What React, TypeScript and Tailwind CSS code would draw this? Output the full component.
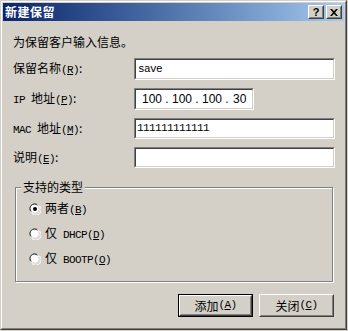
import React from "react";

const CJK = '"Noto Sans CJK SC", "Noto Sans", sans-serif';
const MONO = '"Liberation Mono", "DejaVu Sans Mono", monospace';

function L({ children }: { children: React.ReactNode }) {
  return (
    <span className="text-[11px] tracking-[-0.6px]" style={{ fontFamily: MONO }}>
      {children}
    </span>
  );
}

function Mn({ pre, k }: { pre?: string; k: string }) {
  return (
    <L>
      {pre}(<span className="underline underline-offset-1">{k}</span>)
    </L>
  );
}

function Sunken({ className, children }: { className: string; children?: React.ReactNode }) {
  return (
    <div className={`border border-t-[#808080] border-l-[#808080] border-b-white border-r-white ${className}`}>
      <div className="h-full w-full border border-t-[#404040] border-l-[#404040] border-b-[#d4d0c8] border-r-[#d4d0c8] bg-white flex items-center">
        {children}
      </div>
    </div>
  );
}

function Radio({ checked }: { checked?: boolean }) {
  return (
    <svg width="12" height="12" viewBox="0 0 12 12" className="block">
      <circle cx="6" cy="6" r="5" fill="#ffffff" />
      <path d="M1.2 8.2 A5.3 5.3 0 0 1 8.2 1.2" fill="none" stroke="#808080" strokeWidth="1" />
      <path d="M2.3 8.5 A4.3 4.3 0 0 1 8.5 2.3" fill="none" stroke="#404040" strokeWidth="1" />
      <path d="M3 10.6 A5.3 5.3 0 0 0 10.6 3" fill="none" stroke="#ffffff" strokeWidth="1" />
      <path d="M3.5 9.5 A4.3 4.3 0 0 0 9.5 3.5" fill="none" stroke="#d4d0c8" strokeWidth="1" />
      {checked && <circle cx="6" cy="6" r="2" fill="#000" />}
    </svg>
  );
}

function CapBtn({ children }: { children: React.ReactNode }) {
  return (
    <div className="w-[16px] h-[14px] border border-t-white border-l-white border-b-[#404040] border-r-[#404040] bg-[#d4d0c8]">
      <div className="w-full h-full border border-t-[#d4d0c8] border-l-[#d4d0c8] border-b-[#808080] border-r-[#808080] flex items-center justify-center">
        {children}
      </div>
    </div>
  );
}

function Btn({ def, children }: { def?: boolean; children: React.ReactNode }) {
  const inner = (
    <div className="w-full h-full border border-t-white border-l-white border-b-[#404040] border-r-[#404040]">
      <div className="w-full h-full border border-t-[#d4d0c8] border-l-[#d4d0c8] border-b-[#808080] border-r-[#808080] flex items-center justify-center text-[12px] text-black leading-none">
        {children}
      </div>
    </div>
  );
  return def ? (
    <div className="w-[75px] h-[23px] border border-black">{inner}</div>
  ) : (
    <div className="w-[75px] h-[23px]">{inner}</div>
  );
}

export default function App() {
  return (
    <div className="w-[348px] h-[331px] bg-[#d4d0c8] overflow-hidden" style={{ fontFamily: CJK }}>
      <div className="w-[347px] h-[330px] border border-t-[#d4d0c8] border-l-[#d4d0c8] border-b-[#404040] border-r-[#404040]">
        <div className="w-full h-full border border-t-white border-l-white border-b-[#808080] border-r-[#808080] p-px flex flex-col">
          {/* title bar */}
          <div className="h-[18px] bg-linear-to-r from-[#0a246a] to-[#a6caf0] flex items-center pl-[2px] pr-[2px]">
            <span className="text-white font-bold text-[12px] leading-none tracking-[0.5px]">新建保留</span>
            <div className="ml-auto flex gap-[2px]">
              <CapBtn>
                <span className="text-[11px] font-bold leading-none text-black" style={{ fontFamily: '"Liberation Sans", sans-serif' }}>?</span>
              </CapBtn>
              <CapBtn>
                <svg width="8" height="7" viewBox="0 0 8 7">
                  <path d="M0 0h2l2 2.3L6 0h2L5 3.5 8 7H6L4 4.7 2 7H0l3-3.5z" fill="#000" />
                </svg>
              </CapBtn>
            </div>
          </div>

          {/* body */}
          <div className="flex flex-col pl-[10px] pr-[9px] text-[12px] text-black">
            <div className="mt-[14px] h-[14px] leading-[14px]">为保留客户输入信息。</div>

            <div className="mt-[9px] flex flex-col gap-[8px]">
              <div className="flex items-center h-[22px]">
                <div className="w-[121px] leading-none">保留名称<Mn k="R" />:</div>
                <Sunken className="w-[201px] h-[22px]">
                  <span className="pl-[2px] text-[11px] tracking-[-0.6px]" style={{ fontFamily: MONO }}>save</span>
                </Sunken>
              </div>
              <div className="flex items-center h-[22px]">
                <div className="w-[121px] leading-none"><L>IP </L>地址<Mn k="P" />:</div>
                <Sunken className="w-[120px] h-[22px]">
                  <div className="flex items-center text-[12px] pl-[4px]" style={{ fontFamily: '"Liberation Sans", sans-serif' }}>
                    <span className="w-[24px] text-center">100</span>
                    <span className="w-[6px] text-center">.</span>
                    <span className="w-[24px] text-center">100</span>
                    <span className="w-[6px] text-center">.</span>
                    <span className="w-[24px] text-center">100</span>
                    <span className="w-[6px] text-center">.</span>
                    <span className="w-[24px] pl-[3px]">30</span>
                  </div>
                </Sunken>
              </div>
              <div className="flex items-center h-[21px]">
                <div className="w-[121px] leading-none"><L>MAC </L>地址<Mn k="M" />:</div>
                <Sunken className="w-[201px] h-[21px]">
                  <span className="pl-[1px] text-[11px] tracking-[-0.6px]" style={{ fontFamily: MONO }}>111111111111</span>
                </Sunken>
              </div>
              <div className="flex items-center h-[21px]">
                <div className="w-[121px] leading-none">说明<Mn k="E" />:</div>
                <Sunken className="w-[201px] h-[21px]" />
              </div>
            </div>

            {/* group box */}
            <div className="relative mt-[19px] ml-[2px] w-[318px] h-[95px] border border-[#808080] shadow-[inset_1px_1px_0_#fff,1px_1px_0_#fff]">
              <span className="absolute left-[5px] top-[-8px] px-[2px] bg-[#d4d0c8] leading-[14px]">支持的类型</span>
              <div className="flex flex-col gap-[12px] pt-[14px] pl-[13px]">
                <div className="flex items-center gap-[4px] h-[13px]">
                  <Radio checked />
                  <span className="leading-none">两者<Mn k="B" /></span>
                </div>
                <div className="flex items-center gap-[4px] h-[13px]">
                  <Radio />
                  <span className="leading-none">仅<Mn pre=" DHCP" k="D" /></span>
                </div>
                <div className="flex items-center gap-[4px] h-[13px]">
                  <Radio />
                  <span className="leading-none">仅<Mn pre=" BOOTP" k="O" /></span>
                </div>
              </div>
            </div>

            {/* buttons */}
            <div className="mt-[12px] flex justify-end gap-[6px] pr-[1px]">
              <Btn def>添加<Mn k="A" /></Btn>
              <Btn>关闭<Mn k="C" /></Btn>
            </div>
          </div>
        </div>
      </div>
    </div>
  );
}
